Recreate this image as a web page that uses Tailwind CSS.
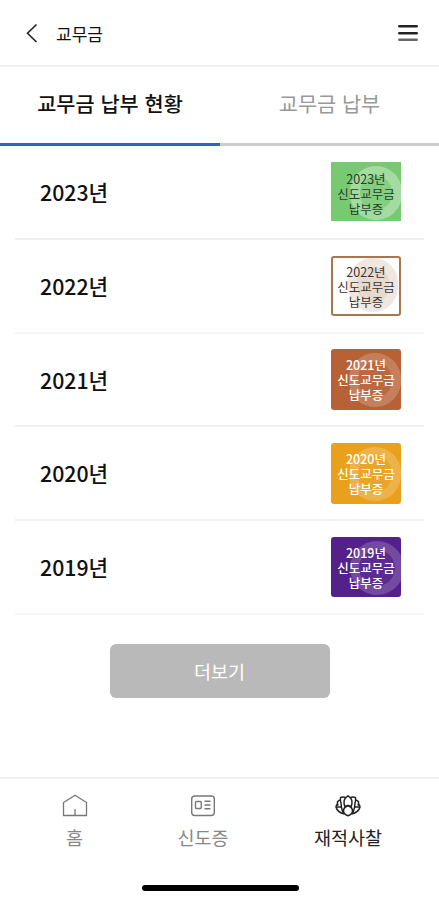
<!DOCTYPE html>
<html lang="ko">
<head>
  <meta charset="UTF-8">
  <meta name="viewport" content="width=device-width, initial-scale=1.0">
  <title>교무금</title>
  <script src="https://cdn.jsdelivr.net/npm/@tailwindcss/browser@4"></script>
</head>
<body class="bg-white font-['Noto_Sans_CJK_KR',sans-serif] text-[#111]">
  <div class="w-full h-[900px] flex flex-col overflow-hidden">
    <!-- Header -->
    <header class="h-[67px] shrink-0 flex items-center border-b-2 border-[#f0f0f0] pl-[26px] pr-[21px]">
      <svg class="w-3 h-5" viewBox="0 0 12 20" fill="none" stroke="#222" stroke-width="1.6">
        <path d="M10.500 1.500 1.500 10.300 10.500 19"></path>
      </svg>
      <h1 class="ml-[18px] text-[17px] leading-6 font-normal pt-[2px]">교무금</h1>
      <svg class="ml-auto w-5 h-[18px]" viewBox="0 0 20 18" fill="none" stroke="#222" stroke-width="2.500" stroke-linecap="round">
        <path d="M1.300 2.300h17.400M1.300 9.200h17.400"></path>
        <path d="M1.300 15.700h17.400" stroke="#666"></path>
      </svg>
    </header>

    <!-- Tabs -->
    <nav class="h-[79px] shrink-0 flex text-[20.800px] leading-[73px]">
      <a class="w-[220px] text-center font-medium border-b-[3px] border-[#2469c9]">교무금 납부 현황</a>
      <a class="flex-1 text-center text-[#999] font-normal border-b-[3px] border-[#cccccc]">교무금 납부</a>
    </nav>

    <!-- Lista -->
    <ul class="mx-[15px]">
      <li class="h-[94px] flex items-center justify-between pl-[25px] pr-[23px] pb-px border-b-2 border-[#efefef]">
        <span class="text-[21.300px] font-medium">2023년</span>
        <div class="relative w-[70px] h-[59px] overflow-hidden bg-[#78ca72] text-[#25402a] text-center text-[12.500px] leading-[15px] pt-[9px]">
          <div class="absolute left-[19px] top-[4px] w-[52px] h-[54px] rounded-full border-[10px] border-white/25 bg-white/10"></div>
          <p class="relative whitespace-nowrap">2023년<br>신도교무금<br>납부증</p>
        </div>
      </li>
      <li class="h-[94px] flex items-center justify-between pl-[25px] pr-[23px] pb-px border-b-2 border-[#f4f4f4]">
        <span class="text-[21.300px] font-medium">2022년</span>
        <div class="relative w-[70px] h-[60px] overflow-hidden rounded-[3px] border-2 border-[#a87650] bg-white text-[#3a3430] text-center text-[12.500px] leading-[15px] pt-[6px]">
          <div class="absolute left-[15px] top-0 w-[50px] h-[54px] rounded-full border-[9px] border-[#efe7e0] bg-[#e6dad0]"></div>
          <p class="relative -mx-1 whitespace-nowrap">2022년<br>신도교무금<br>납부증</p>
        </div>
      </li>
      <li class="h-[93px] flex items-center justify-between pl-[25px] pr-[23px] border-b-2 border-[#efefef]">
        <span class="text-[21.300px] font-medium">2021년</span>
        <div class="relative w-[70px] h-[61px] overflow-hidden rounded-[3px] bg-[#b86137] text-white text-center text-[12.500px] font-medium leading-[15px] pt-[8px]">
          <div class="absolute left-[18px] top-[4px] w-[52px] h-[54px] rounded-full border-[9px] border-white/15 bg-white/5"></div>
          <p class="relative whitespace-nowrap">2021년<br>신도교무금<br>납부증</p>
        </div>
      </li>
      <li class="h-[94px] flex items-center justify-between pl-[25px] pr-[23px] border-b-2 border-[#efefef]">
        <span class="text-[21.300px] font-medium">2020년</span>
        <div class="relative w-[70px] h-[61px] overflow-hidden rounded-[3px] bg-[#e9a01d] text-white text-center text-[12.500px] font-medium leading-[15px] pt-[8px]">
          <div class="absolute left-[18px] top-[4px] w-[52px] h-[54px] rounded-full border-[9px] border-white/15 bg-white/5"></div>
          <p class="relative whitespace-nowrap">2020년<br>신도교무금<br>납부증</p>
        </div>
      </li>
      <li class="h-[94px] flex items-center justify-between pl-[25px] pr-[23px] border-b-2 border-[#f6f6f6]">
        <span class="text-[21.300px] font-medium">2019년</span>
        <div class="relative w-[70px] h-[60px] overflow-hidden rounded-[3px] bg-[#54208a] text-white text-center text-[12.500px] font-medium leading-[15px] pt-[8px]">
          <div class="absolute left-[19px] top-[4px] w-[54px] h-[54px] rounded-full border-[9px] border-white/15 bg-white/5"></div>
          <p class="relative whitespace-nowrap">2019년<br>신도교무금<br>납부증</p>
        </div>
      </li>
    </ul>

    <button class="mt-[29px] mx-auto w-[220px] h-[54px] shrink-0 rounded-md bg-[#b9b9b9] text-white text-[18.500px] font-normal pt-px">더보기</button>

    <!-- Bottom nav -->
    <nav class="mt-auto h-[123px] shrink-0 border-t-2 border-[#efefef] flex flex-col">
      <div class="flex pt-[15px] text-[18.500px] leading-7 text-[#888]">
        <a class="w-[149px] flex flex-col items-center gap-[5px]">
          <svg class="w-[26px] h-6" viewBox="0 0 26 24" fill="none" stroke="#777" stroke-width="1.300" stroke-linejoin="round">
            <path d="M1.500 8.500 13 1.300 24.500 8.500v13h-23zM13 15v6.500"></path>
          </svg>
          홈
        </a>
        <a class="w-[108px] flex flex-col items-center gap-[5px]">
          <svg class="w-[26px] h-6" viewBox="0 0 26 24" fill="none" stroke="#777" stroke-width="1.400">
            <rect x="1.700" y="2" width="22.600" height="19.500" rx="3"></rect>
            <rect x="5.500" y="7.500" width="5.800" height="7" rx="1"></rect>
            <path d="M14.500 7.300h6M14.500 11h6M14.500 14.800h6"></path>
          </svg>
          신도증
        </a>
        <a class="w-[182px] flex flex-col items-center gap-[5px] text-[#222]">
          <svg class="w-[26px] h-6" viewBox="0 0 26 24" fill="none" stroke="#222" stroke-width="1.500" stroke-linejoin="round">
            <path d="M13 1.800c2.600 1.500 4 4 4 6.500 0 1.800-.4 3.200-1 4.400L13 11.500l-3 1.200c-.6-1.200-1-2.600-1-4.400 0-2.500 1.400-5 4-6.500z"></path>
            <path d="M10.500 3.500C8.500 2.900 6.800 3 5.500 3.700c-.3 1.500-.2 3 .3 4.300M15.500 3.500c2-.6 3.700-.5 5 .2.300 1.500.2 3-.3 4.300"></path>
            <path d="M5.500 6c-1.300.2-2.300.8-3 1.700-.2 1.500 0 2.800.6 4M20.500 6c1.300.2 2.300.8 3 1.700.2 1.500 0 2.800-.6 4"></path>
            <path d="M2.600 9.800C1.600 10.600 1 11.700 1 13c.8 3.300 4 6 8.500 7M23.400 9.800c1 .8 1.600 1.900 1.600 3.200-.8 3.300-4 6-8.500 7"></path>
            <path d="M1 13h5.500M25 13h-5.500M5.800 8c.3 3.800.9 7.300 2.200 10.800M20.200 8c-.3 3.800-.9 7.300-2.200 10.800"></path>
            <path d="M13 11.500c3 1.200 4.500 3.200 4.500 5.400 0 1.900-1.500 3.600-4.500 4.900-3-1.300-4.500-3-4.500-4.900 0-2.200 1.500-4.200 4.500-5.400z"></path>
          </svg>
          재적사찰
        </a>
      </div>
      <div class="mt-auto mb-[9px] ml-[142px] w-[157px] h-[6px] rounded-full bg-black"></div>
    </nav>
  </div>
</body>
</html>
